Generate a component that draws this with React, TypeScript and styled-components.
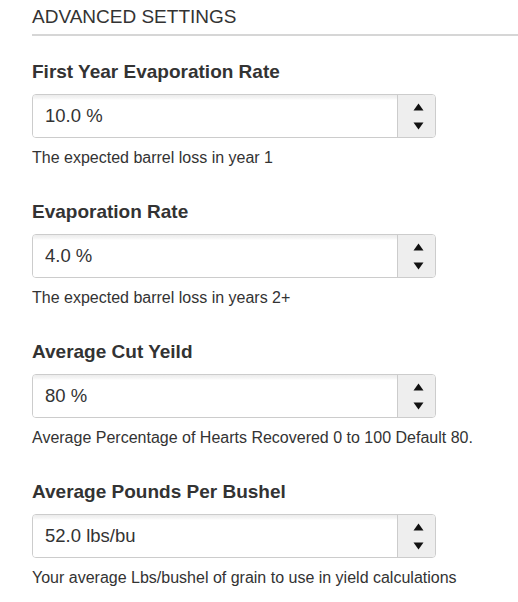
import styled, { createGlobalStyle } from "styled-components";

const GlobalStyle = createGlobalStyle`
    html, body {
        margin: 0;
        padding: 0;
        background: #fff;
    }
    body {
        font-family: "Liberation Sans", Arial, sans-serif;
        color: #333;
    }
`;

type Field = {
    label: string;
    value: string;
    help: string;
};

const fields: Field[] = [
    { label: "First Year Evaporation Rate", value: "10.0 %", help: "The expected barrel loss in year 1" },
    { label: "Evaporation Rate", value: "4.0 %", help: "The expected barrel loss in years 2+" },
    { label: "Average Cut Yeild", value: "80 %", help: "Average Percentage of Hearts Recovered 0 to 100 Default 80." },
    { label: "Average Pounds Per Bushel", value: "52.0 lbs/bu", help: "Your average Lbs/bushel of grain to use in yield calculations" },
];

// 上下の三角アイコン
const Arrow = ({ down }: { down?: boolean }) => (
    <svg width="11" height="8" viewBox="0 0 11 8">
        {down ? <polygon points="0.5,0.5 10.5,0.5 5.5,7.5" fill="#111" /> : <polygon points="5.5,0.5 10.5,7.5 0.5,7.5" fill="#111" />}
    </svg>
);

export default function App() {
    return (
        <>
            <GlobalStyle />
            <Page>
                <Header>Advanced Settings</Header>
                {fields.map((f) => (
                    <Group key={f.label}>
                        <Label>{f.label}</Label>
                        <Spinner>
                            <Input type="text" defaultValue={f.value} readOnly />
                            <Buttons>
                                <Arrow />
                                <Arrow down />
                            </Buttons>
                        </Spinner>
                        <Help>{f.help}</Help>
                    </Group>
                ))}
            </Page>
        </>
    );
}

// styled-components
const Page = styled.div`
    padding: 6px 0 0 32px;
`;

const Header = styled.div`
    font-size: 19px;
    line-height: 22px;
    text-transform: uppercase;
    color: #333;
    padding-bottom: 6px;
    border-bottom: 2px solid #d6d6d6;
    margin-bottom: 25px;
`;

const Group = styled.div`
    display: flex;
    flex-direction: column;
    margin-bottom: 33px;
`;

const Label = styled.label`
    font-size: 19px;
    line-height: 22px;
    font-weight: bold;
    color: #333;
    margin-bottom: 11px;
`;

const Spinner = styled.div`
    display: flex;
    width: 404px;
    height: 44px;
    box-sizing: border-box;
    border: 1px solid #ccc;
    border-radius: 4px;
    overflow: hidden;
`;

const Input = styled.input`
    flex: 1;
    min-width: 0;
    border: none;
    outline: none;
    margin: 0;
    padding: 0 12px;
    font-family: "Liberation Sans", Arial, sans-serif;
    font-size: 18.5px;
    color: #333;
    background: linear-gradient(#ececec 0, #f4f4f4 3px, #fff 5px);
`;

const Buttons = styled.div`
    width: 38px;
    border-left: 1px solid #ccc;
    background: #eee;
    display: flex;
    flex-direction: column;
    align-items: center;
    justify-content: center;
    gap: 11px;
    padding-left: 3px;
    box-sizing: border-box;
`;

const Help = styled.div`
    font-size: 16px;
    line-height: 20px;
    color: #333;
    margin-top: 10px;
`;
